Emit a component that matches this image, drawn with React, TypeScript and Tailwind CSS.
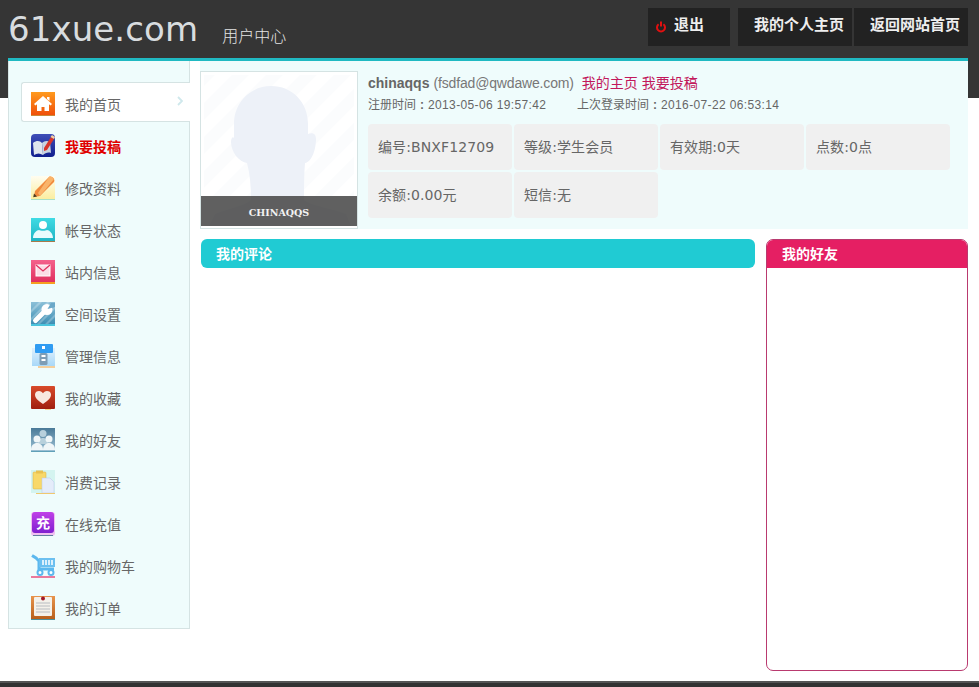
import React from "react";

const cjk = { fontFamily: '"Liberation Sans","Noto Sans CJK SC",sans-serif' };

const Grad = ({ id, a, b }: { id: string; a: string; b: string }) => (
  <defs>
    <linearGradient id={id} x1="0" y1="0" x2="0" y2="1">
      <stop offset="0" stopColor={a} />
      <stop offset="1" stopColor={b} />
    </linearGradient>
  </defs>
);

const S = ({ children }: { children: React.ReactNode }) => (
  <svg width="24" height="24" viewBox="0 0 24 24" className="shrink-0">{children}</svg>
);

const icons: Record<string, React.ReactNode> = {
  home: (
    <S>
      <Grad id="h" a="#ff9a1e" b="#f0500a" />
      <rect width="24" height="23" fill="url(#h)" />
      <rect y="23" width="24" height="1" fill="#c98a3a" />
      <path d="M12 4 3 12l1.500 1.500L6 12.200V19h4.500v-4h3v4H18v-6.800l1.500 1.300L21 12z" fill="#fff" />
      <path d="M16 5h2.500v4L16 7z" fill="#fff" />
    </S>
  ),
  post: (
    <S>
      <Grad id="p" a="#3f4fb8" b="#101f8e" />
      <rect width="24" height="23" rx="4" fill="url(#p)" />
      <path d="M2 9c4-3 7-2 9 0l1 12c-3-2-6-2-9 0z" fill="#dfe6ee" />
      <path d="M11 9c2-2 5-3 8-1l1 11c-3-1-6 0-8 2z" fill="#c9d4e0" />
      <path d="m13 14 7-11 3 2-7 11-3 1z" fill="#d8352a" />
      <path d="m19.500 3 1.500-2 3 2-1 2z" fill="#f6cfa0" />
    </S>
  ),
  edit: (
    <S>
      <Grad id="e" a="#fffdf0" b="#fbeea0" />
      <rect width="24" height="23" fill="url(#e)" />
      <rect y="23" width="24" height="1" fill="#a9e0c8" />
      <path d="M4 15 18 1c1.500-1 4 0 5 2 .5 1 .5 2 0 3L9 20l-6 1z" fill="#f08a3c" />
      <path d="M18 1c1.500-1 4 0 5 2L9 20l-2-3z" fill="#f9b46a" />
      <path d="m3 17.500-.8 3.800 3.800-.8z" fill="#4a3a20" />
    </S>
  ),
  user: (
    <S>
      <Grad id="u" a="#3fdbe4" b="#1fb4c4" />
      <rect width="24" height="23" fill="url(#u)" />
      <rect y="23" width="24" height="1" fill="#a87a4a" />
      <circle cx="12" cy="7" r="4" fill="#fff" />
      <path d="M2 20c0-5 4-8 6-8 1 1 7 1 8 0 2 0 6 3 6 8z" fill="#e8fbfd" />
    </S>
  ),
  mail: (
    <S>
      <Grad id="m" a="#f4628c" b="#e0305f" />
      <rect width="24" height="22" fill="url(#m)" />
      <rect y="22" width="24" height="2" fill="#f5a020" />
      <rect x="5" y="5" width="14" height="11" fill="#fbdde6" stroke="#fff" />
      <path d="m5 5 7 6 7-6" fill="none" stroke="#e0305f" strokeWidth="1.300" />
    </S>
  ),
  tool: (
    <S>
      <Grad id="t" a="#8cc0d8" b="#3e8fb4" />
      <rect width="24" height="22" fill="url(#t)" />
      <path d="M0 8 8 0h3L0 11zM0 16 16 0h3L0 19zM6 22 24 4v3L9 22zM14 22l10-10v3l-7 7z" fill="#ffffff" opacity=".25" />
      <rect y="22" width="24" height="2" fill="#4ac4dc" />
      <path d="M4.500 18.500 13 10" stroke="#fff" strokeWidth="5" strokeLinecap="round" />
      <circle cx="16" cy="7.500" r="5.500" fill="#fff" />
      <path d="m16.500 7 3.500-6h4v4z" fill="#6aa8c8" />
    </S>
  ),
  key: (
    <S>
      <Grad id="k" a="#dff0fc" b="#a8d8f8" />
      <rect x="1" y="4" width="23" height="18" fill="url(#k)" />
      <rect y="22" x="7" width="17" height="2" fill="#f4cf9c" />
      <rect x="4" width="18" height="9" rx="1" fill="#2f9cf2" />
      <rect x="11" y="2" width="3" height="3" fill="#fff" />
      <rect x="8.500" y="9" width="8" height="12" rx="1.500" fill="#7d9db5" />
      <rect x="10.500" y="11" width="4" height="2" fill="#fff" />
      <rect x="10.500" y="15" width="4" height="2" fill="#fff" />
    </S>
  ),
  heart: (
    <S>
      <Grad id="r" a="#d84a2a" b="#a01f10" />
      <rect width="24" height="23" rx="1" fill="url(#r)" />
      <path d="M12 18C6 14 4 11.500 4 8.500 4 6 6 5 8 5c2 0 3.200 1 4 2.300C12.800 6 14 5 16 5c2 0 4 1 4 3.500 0 3-2 5.500-8 9.500z" fill="#f8e8e0" />
      <rect x="14" y="23" width="6" height="1" fill="#f8d890" />
    </S>
  ),
  friends: (
    <S>
      <Grad id="f" a="#4a7a98" b="#9cc0d4" />
      <rect width="24" height="23" fill="url(#f)" />
      <rect y="23" width="24" height="1" fill="#60a0b8" />
      <circle cx="12" cy="5.500" r="3.500" fill="#b8d0dc" />
      <path d="M7 16c0-4 2-6 5-6s5 2 5 6z" fill="#b8d0dc" />
      <circle cx="6" cy="11" r="3.500" fill="#f0f6f8" />
      <path d="M0 22c0-5 3-7 6-7s6 2 6 7z" fill="#f0f6f8" />
      <circle cx="18" cy="11" r="3.500" fill="#f0f6f8" />
      <path d="M12 22c0-5 3-7 6-7s6 2 6 7z" fill="#f0f6f8" />
    </S>
  ),
  record: (
    <S>
      <rect width="24" height="23" fill="#d4f4f0" />
      <rect x="2" y="2" width="13" height="17" rx="1" fill="#f8d868" stroke="#d8b040" strokeWidth=".5" />
      <rect x="5" y="0.500" width="7" height="3" fill="#e8c050" />
      <path d="M11 8h8l4 4v11H11z" fill="#e4ecfa" stroke="#b8c8e8" strokeWidth=".5" />
      <rect y="23" x="5" width="19" height="1" fill="#f0c870" />
    </S>
  ),
  charge: (
    <S>
      <Grad id="c" a="#c040e8" b="#8020d0" />
      <rect y="0" width="24" height="24" rx="3" fill="#f0c0f0" />
      <rect x="1" y="0" width="22" height="21" rx="3" fill="url(#c)" />
      <rect y="23" x="2" width="20" height="1" fill="#6080a0" />
      <text x="12" y="16" textAnchor="middle" fontSize="14" fontWeight="700" fill="#ffffff" fontFamily='"Noto Sans CJK SC",sans-serif'>充</text>
    </S>
  ),
  cart: (
    <S>
      <rect y="22" width="24" height="2" fill="#ea7a9c" />
      <path d="M1 1.500 5 4l3 3v8h15" fill="none" stroke="#5cb8ee" strokeWidth="3" />
      <path d="M8 4h16v9H8z" fill="#6cc0f0" />
      <path d="M12 6v5M15 6v5M18 6v5M21 6v5" stroke="#fff" strokeWidth="1.500" />
      <circle cx="9" cy="18.500" r="2.500" fill="#fff" stroke="#5cb8ee" strokeWidth="2" />
      <circle cx="20" cy="18.500" r="2.500" fill="#fff" stroke="#5cb8ee" strokeWidth="2" />
    </S>
  ),
  order: (
    <S>
      <Grad id="o" a="#e8944c" b="#b8601c" />
      <rect width="24" height="23" fill="url(#o)" />
      <rect y="23" width="24" height="1" fill="#4a90a0" />
      <rect x="3" y="1" width="18" height="19" rx="1" fill="#f4f1ea" />
      <circle cx="12" cy="2.500" r="2" fill="#a01828" />
      <path d="M5 7h14M5 10h14M5 13h14M5 16h14" stroke="#b8bcc0" strokeWidth="1" />
    </S>
  ),
};

const menu = [
  ["home", "我的首页"],
  ["post", "我要投稿"],
  ["edit", "修改资料"],
  ["user", "帐号状态"],
  ["mail", "站内信息"],
  ["tool", "空间设置"],
  ["key", "管理信息"],
  ["heart", "我的收藏"],
  ["friends", "我的好友"],
  ["record", "消费记录"],
  ["charge", "在线充值"],
  ["cart", "我的购物车"],
  ["order", "我的订单"],
];

const Avatar = () => (
  <div className="relative w-[158px] h-[158px] border border-[#d5e3e3] bg-white overflow-hidden shrink-0">
    <svg width="156" height="156" viewBox="0 0 156 156" className="block">
      <defs>
        <pattern id="st" width="24" height="24" patternUnits="userSpaceOnUse" patternTransform="rotate(45)">
          <rect width="12" height="24" fill="#fbfcfd" />
          <rect x="12" width="12" height="24" fill="#ffffff" />
        </pattern>
      </defs>
      <rect x="3" y="3" width="150" height="150" fill="url(#st)" />
      <path
        d="M70 14C91 14 107 30 107 52V62C112 60 115 62 115 67C115 77 111 90 104 91C103 102 103 115 103 128C110 134 130 136 145 142L150 154H8L14 142C28 136 44 134 50 128C50 115 49 102 46 91C38 90 30 80 30 70C30 66 32 64 33 66V52C33 30 50 14 70 14Z"
        fill="#edf1f8"
      />
    </svg>
    <div
      className="absolute left-0 right-0 bottom-[2px] h-[30px] bg-[#444444]/85 text-[#f2f2f2] text-[9.5px] font-bold text-center leading-[33px]"
      style={{ fontFamily: '"DejaVu Serif",serif' }}
    >
      CHINAQQS
    </div>
  </div>
);

const stats = ["编号:BNXF12709", "等级:学生会员", "有效期:0天", "点数:0点", "余额:0.00元", "短信:无"];

const Colon = () => <span className="inline-block w-[12px] text-center font-bold">:</span>;

export default function App() {
  return (
    <div className="relative w-[979px] h-[687px] bg-white overflow-hidden text-[#666666]" style={cjk}>
      <header className="h-[98px] bg-[#353535] flex items-start pl-[8px] pr-[11px]">
        <div className="flex-1 flex items-start">
          <span
            className="text-[34px] leading-[40px] mt-[9px] text-[#d8dcdf] tracking-[0.1px]"
            style={{ fontFamily: '"DejaVu Sans",sans-serif' }}
          >
            61xue.com
          </span>
          <span className="ml-[24px] mt-[25px] text-[16px] leading-[20px] text-[#e4e4e4] font-light" style={{ fontFamily: '"Noto Sans CJK SC",sans-serif' }}>用户中心</span>
        </div>
        <div className="flex mt-[8px] text-[15px] font-bold text-[#eeeeee]">
          <div className="w-[82px] h-[38px] bg-[#222222] flex items-center pl-[8px] mr-[8px]">
            <svg width="10" height="12" viewBox="0 0 10 12" className="mr-[8px]">
              <path d="M2.600 3.300a4 4 0 1 0 4.800 0" fill="none" stroke="#e01010" strokeWidth="2" />
              <path d="M5 0.500v5" stroke="#e01010" strokeWidth="2" />
            </svg>
            <span className="-mt-[3px]">退出</span>
          </div>
          <div className="w-[114px] h-[38px] bg-[#222222] flex items-center pl-[16px] mr-[2px] pb-[3px]">我的个人主页</div>
          <div className="w-[114px] h-[38px] bg-[#222222] flex items-center pl-[16px] pb-[3px]">返回网站首页</div>
        </div>
      </header>

      <main className="relative ml-[8px] w-[960px] -mt-[40px] border-t-[3px] border-[#20b9c2] flex bg-white">
        <aside className="w-[182px] h-[568px] bg-[#effcfc] border border-t-0 border-[#d5e3e3] pt-[21px] pl-[12px] shrink-0">
          {menu.map(([k, label], i) => (
            <div
              key={k}
              className={
                i === 0
                  ? "relative -mr-[1px] h-[40px] mb-[2px] pl-[9px] flex items-center gap-[10px] bg-white border border-r-0 border-[#d5e3e3] rounded-l-[3px]"
                  : "h-[42px] pl-[10px] flex items-center gap-[10px] translate-y-[1px]"
              }
            >
              <div className={i === 0 ? "mt-[4px] flex" : "flex"}>{icons[k]}</div>
              <span
                className={
                  i === 1
                    ? "text-[14px] font-bold text-[#e00000] translate-y-[1px]"
                    : i === 0
                      ? "text-[14px] text-[#666666] mt-[6px]"
                      : "text-[14px] text-[#666666] translate-y-[1px]"
                }
              >
                {label}
              </span>
              {i === 0 && (
                <svg width="6" height="10" viewBox="0 0 6 10" className="absolute left-[155px] top-[13px]">
                  <path d="m1 1 4 4-4 4" fill="none" stroke="#cfe8ec" strokeWidth="1.800" />
                </svg>
              )}
            </div>
          ))}
        </aside>

        <section className="ml-[10px] w-[768px]">
          <div className="h-[168px] bg-[#effcfc] flex pt-[10px]">
            <Avatar />
            <div className="pl-[10px] flex-1">
              <div className="flex items-baseline h-[24px] text-[14px] leading-[24px]">
                <b className="text-[#666666]">chinaqqs</b>
                <span className="ml-[4px] text-[#777777] tracking-[-0.16px]">(fsdfad@qwdawe.com)</span>
                <span className="ml-[8px] text-[#c2185b]">我的主页 我要投稿</span>
              </div>
              <div className="flex h-[20px] leading-[20px] text-[12px] text-[#666666]">
                <span className="w-[209px]">
                  注册时间<Colon /><span className="tracking-[0.36px]">2013-05-06 19:57:42</span>
                </span>
                <span>
                  上次登录时间<Colon /><span className="tracking-[0.36px]">2016-07-22 06:53:14</span>
                </span>
              </div>
              <div className="mt-[9px] grid grid-cols-[144px_144px_144px_144px] gap-[2px]">
                {stats.map((s) => (
                  <div
                    key={s}
                    className="h-[46px] bg-[#f0f0f0] rounded-[4px] pl-[10px] flex items-center text-[14px] text-[#666666] tracking-[0.1px]"
                    style={{ fontFamily: '"DejaVu Sans","Noto Sans CJK SC",sans-serif' }}
                  >
                    {s}
                  </div>
                ))}
              </div>
            </div>
          </div>

          <div className="mt-[10px] flex items-start gap-[11px]">
            <div className="ml-[1px] w-[554px] h-[29px] bg-[#20cbd3] rounded-[6px] pl-[15px] pt-[2px] flex items-center text-[14px] font-bold text-white">
              我的评论
            </div>
            <div className="w-[202px] h-[432px] border border-[#b93a6f] rounded-[7px] overflow-hidden">
              <div className="h-[28px] -mt-px bg-[#e51f63] pl-[15px] flex items-center text-[14px] font-bold text-white box-content pt-px">
                我的好友
              </div>
            </div>
          </div>
        </section>
      </main>

      <footer className="absolute left-0 right-0 bottom-0 h-[6px] bg-[#333333] border-t-2 border-[#555555]" />
    </div>
  );
}
